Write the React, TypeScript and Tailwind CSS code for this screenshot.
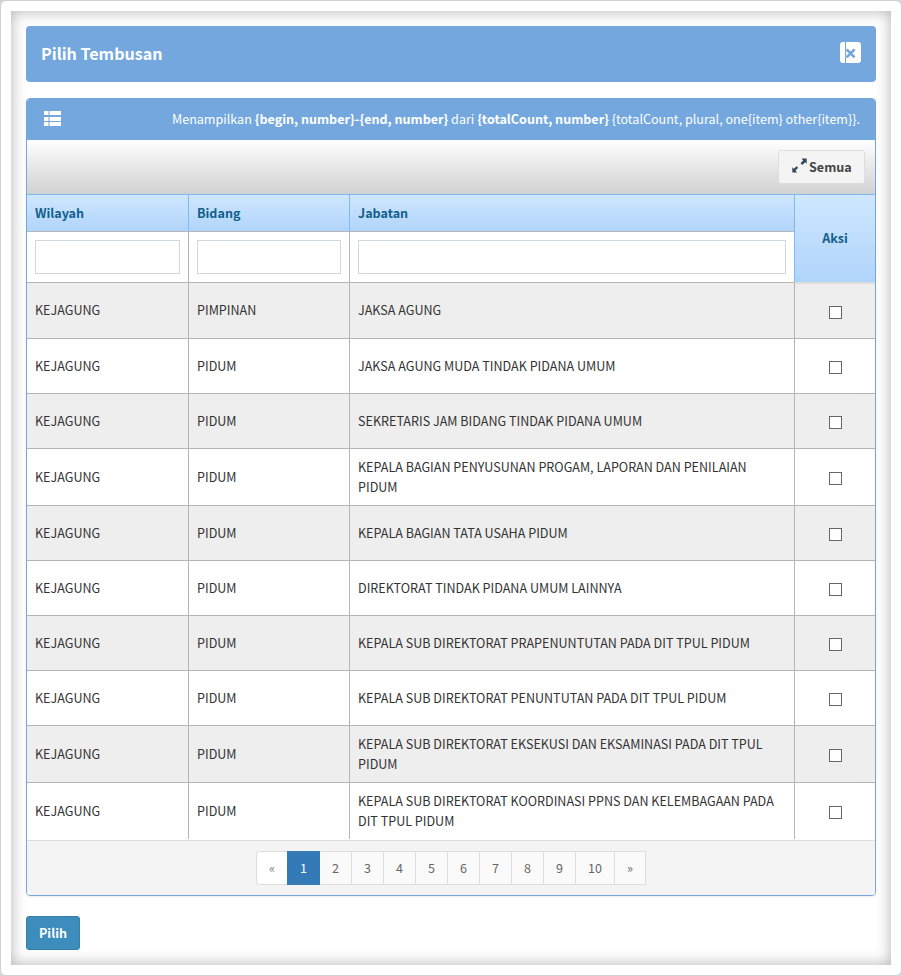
import React from "react";

type Row = { bidang: string; jabatan: string; height: string };

const rows: Row[] = [
  { bidang: "PIMPINAN", jabatan: "JAKSA AGUNG", height: "h-14" },
  { bidang: "PIDUM", jabatan: "JAKSA AGUNG MUDA TINDAK PIDANA UMUM", height: "h-[55px]" },
  { bidang: "PIDUM", jabatan: "SEKRETARIS JAM BIDANG TINDAK PIDANA UMUM", height: "h-[55px]" },
  { bidang: "PIDUM", jabatan: "KEPALA BAGIAN PENYUSUNAN PROGAM, LAPORAN DAN PENILAIAN PIDUM", height: "h-[57px]" },
  { bidang: "PIDUM", jabatan: "KEPALA BAGIAN TATA USAHA PIDUM", height: "h-[55px]" },
  { bidang: "PIDUM", jabatan: "DIREKTORAT TINDAK PIDANA UMUM LAINNYA", height: "h-[55px]" },
  { bidang: "PIDUM", jabatan: "KEPALA SUB DIREKTORAT PRAPENUNTUTAN PADA DIT TPUL PIDUM", height: "h-[55px]" },
  { bidang: "PIDUM", jabatan: "KEPALA SUB DIREKTORAT PENUNTUTAN PADA DIT TPUL PIDUM", height: "h-[55px]" },
  { bidang: "PIDUM", jabatan: "KEPALA SUB DIREKTORAT EKSEKUSI DAN EKSAMINASI PADA DIT TPUL PIDUM", height: "h-[57px]" },
  { bidang: "PIDUM", jabatan: "KEPALA SUB DIREKTORAT KOORDINASI PPNS DAN KELEMBAGAAN PADA DIT TPUL PIDUM", height: "h-14" },
];

const pages = ["2", "3", "4", "5", "6", "7", "8", "9", "10"];

function CloseIcon() {
  return (
    <svg width="21" height="21" viewBox="0 0 21 21" className="block">
      <rect width="21" height="21" rx="3" fill="#fff" />
      <path d="M5.5 0v21" stroke="#73a7de" strokeWidth="1" />
      <path d="M6.6 7.4l8 8M14.6 7.4l-8 8" stroke="#73a7de" strokeWidth="2.7" />
    </svg>
  );
}

function ListIcon() {
  return (
    <svg width="17" height="15" viewBox="0 0 17 15" fill="#fff" className="block">
      <path d="M0 0h4.5v4H0zM5.5 0H17v4H5.5zM0 6h4.5v4H0zM5.5 6H17v4H5.5zM0 11h4.5v4H0zM5.5 11H17v4H5.5z" />
    </svg>
  );
}

function ExpandIcon() {
  return (
    <svg width="15" height="15" viewBox="0 0 15 15" fill="#34495e" className="block">
      <path d="M9.5 0.5H14.7v5.3l-1.6-1.5-2.9 2.6-1.7-1.6 2.7-2.9zM0.3 9.3l1.5 1.4 2.8-2.5 1.6 1.6-2.7 2.7L5.2 14.4H0.3z" />
    </svg>
  );
}

function HeadCell({ label }: { label: string }) {
  return (
    <div className="flex h-[37px] items-center border-r border-b border-r-[#80b9f3] border-b-[#b4b8bc] bg-linear-to-b from-[#cfe7ff] to-[#b0d4fa] pl-2 font-bold text-[#11608c]">
      {label}
    </div>
  );
}

function FilterCell() {
  return (
    <div className="flex h-[51px] items-center border-r border-b border-[#b5b5b5] px-2">
      <input className="h-[34px] w-full border border-[#d2d6de] bg-white" />
    </div>
  );
}

export default function App() {
  return (
    <div className="h-[976px] w-[902px] bg-[#d5d5d8] font-['Noto_Sans_CJK_SC',sans-serif] text-[12.57px] leading-5 text-[#333]">
      <div className="h-full rounded-md border border-[#d0d0d2] bg-white p-2.5">
        <div className="h-[954px] px-[15px] pt-[15px] shadow-[inset_0_0_15px_rgba(0,0,0,0.3)]">
          <header className="flex h-14 items-center justify-between rounded bg-[#73a7de] pr-[15px] pl-[15px]">
            <h1 className="pb-0.5 text-[16.1px] font-bold text-white">Pilih Tembusan</h1>
            <button className="mb-[3px]"><CloseIcon /></button>
          </header>

          <section className="mt-4 h-[798px] overflow-hidden rounded border border-[#73a7de] shadow-[0_1px_2px_rgba(0,0,0,0.08)]">
            <div className="flex h-[41px] items-center justify-between bg-[#73a7de] pr-[15px] pb-0.5 pl-[17px] text-white">
              <ListIcon />
              <p className="whitespace-nowrap">
                Menampilkan <b>{"{begin, number}-{end, number}"}</b> dari <b>{"{totalCount, number}"}</b>{" {totalCount, plural, one{item} other{item}}."}
              </p>
            </div>

            <div className="flex h-[55px] justify-end border-b border-[#80b9f3] bg-linear-to-b from-white to-[#d1d1d1] pt-2.5 pr-2.5">
              <button className="flex h-[34px] w-[87px] items-center rounded-[3px] border border-[#ddd] bg-[#f4f4f4] pl-[13px] font-bold text-[#444]">
                <span className="mr-0.5 mb-[3px]"><ExpandIcon /></span>
                Semua
              </button>
            </div>

            <div className="flex">
              <div className="grid grid-cols-[162px_161px_445px]">
                <HeadCell label="Wilayah" />
                <HeadCell label="Bidang" />
                <HeadCell label="Jabatan" />
                <FilterCell />
                <FilterCell />
                <FilterCell />
              </div>
              <div className="-ml-px flex w-[81px] items-center justify-center border-b border-l border-b-[#ddd] border-l-[#80b9f3] bg-linear-to-b from-[#cfe7ff] to-[#b0d4fa] pb-0.5 font-bold text-[#11608c]">
                Aksi
              </div>
            </div>

            {rows.map((row, i) => (
              <div
                key={i}
                className={`grid grid-cols-[162px_161px_445px_80px] ${row.height} ${i % 2 ? "bg-white" : "bg-[#eee]"} ${i < 9 ? "border-b border-[#b5b5b5]" : ""}`}
              >
                <div className={`flex items-center border-r border-[#b5b5b5] pl-2 ${i === 0 ? "pb-px" : ""}`}>KEJAGUNG</div>
                <div className={`flex items-center border-r border-[#b5b5b5] pl-2 ${i === 0 ? "pb-px" : ""}`}>{row.bidang}</div>
                <div className={`flex items-center border-r border-[#b5b5b5] px-2 ${i === 0 ? "pb-px" : ""}`}>{row.jabatan}</div>
                <div className={`flex items-center justify-center pt-[3px] ${i === 0 ? "border-t border-[#ddd]" : ""}`}>
                  <input type="checkbox" className="size-[13px] appearance-none border border-[#666] bg-white" />
                </div>
              </div>
            ))}

            <footer className="mt-px flex h-[55px] justify-center border-t border-[#ddd] bg-[#f4f4f4] pt-2.5">
              <nav className="flex h-[34px] text-[#666]">
                <span className="flex w-[31px] items-center justify-center rounded-l-[4px] border border-r-0 border-[#ddd] bg-white text-[#777]">«</span>
                <span className="flex w-[33px] items-center justify-center bg-[#337ab7] text-white">1</span>
                {pages.map((p) => (
                  <span key={p} className={`flex items-center justify-center border border-l-0 border-[#ddd] bg-[#fafafa] ${p === "10" ? "w-[39px]" : "w-8"}`}>{p}</span>
                ))}
                <span className="flex w-[31px] items-center justify-center border border-l-0 border-[#ddd] bg-[#fafafa] text-[#666]">»</span>
              </nav>
            </footer>
          </section>

          <button className="mt-5 flex h-[34px] w-[54px] items-center justify-center rounded-[3px] border border-[#367fa9] bg-[#3c8dbc] font-bold text-white">Pilih</button>
        </div>
      </div>
    </div>
  );
}
